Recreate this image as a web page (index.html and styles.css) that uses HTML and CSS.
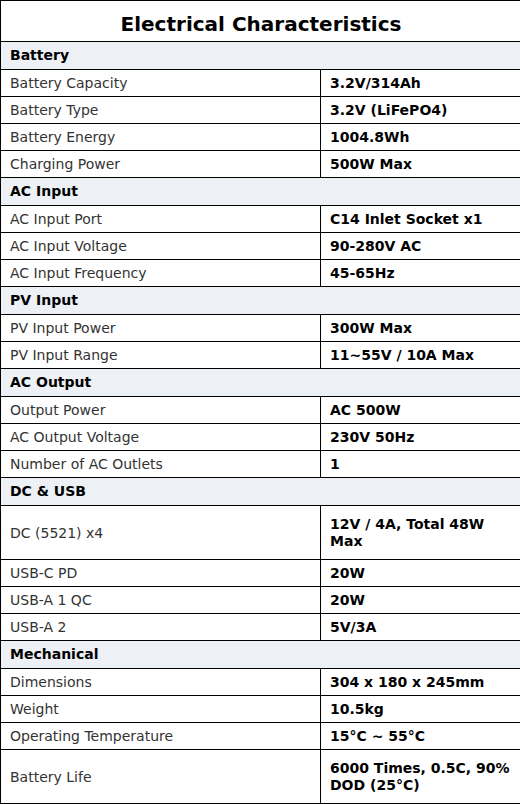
FILE: index.html
```html
<!DOCTYPE html>
<html>
<head>
<meta charset="utf-8">
<link rel="stylesheet" href="styles.css">
</head>
<body>
<table class="spec">
  <colgroup><col class="c1"><col class="c2"></colgroup>
  <tr><th colspan="2" class="title">Electrical Characteristics</th></tr>
  <tr><td colspan="2" class="sec">Battery</td></tr>
  <tr><td class="lab">Battery Capacity</td><td class="val">3.2V/314Ah</td></tr>
  <tr><td class="lab">Battery Type</td><td class="val">3.2V (LiFePO4)</td></tr>
  <tr><td class="lab">Battery Energy</td><td class="val">1004.8Wh</td></tr>
  <tr><td class="lab">Charging Power</td><td class="val">500W Max</td></tr>
  <tr><td colspan="2" class="sec">AC Input</td></tr>
  <tr><td class="lab">AC Input Port</td><td class="val">C14 Inlet Socket x1</td></tr>
  <tr><td class="lab">AC Input Voltage</td><td class="val">90-280V AC</td></tr>
  <tr><td class="lab">AC Input Frequency</td><td class="val">45-65Hz</td></tr>
  <tr><td colspan="2" class="sec">PV Input</td></tr>
  <tr><td class="lab">PV Input Power</td><td class="val">300W Max</td></tr>
  <tr><td class="lab">PV Input Range</td><td class="val">11~55V / 10A Max</td></tr>
  <tr><td colspan="2" class="sec">AC Output</td></tr>
  <tr><td class="lab">Output Power</td><td class="val">AC 500W</td></tr>
  <tr><td class="lab">AC Output Voltage</td><td class="val">230V 50Hz</td></tr>
  <tr><td class="lab">Number of AC Outlets</td><td class="val">1</td></tr>
  <tr><td colspan="2" class="sec">DC &amp; USB</td></tr>
  <tr class="tall"><td class="lab">DC (5521) x4</td><td class="val">12V / 4A, Total 48W Max</td></tr>
  <tr><td class="lab">USB-C PD</td><td class="val">20W</td></tr>
  <tr><td class="lab">USB-A 1 QC</td><td class="val">20W</td></tr>
  <tr><td class="lab">USB-A 2</td><td class="val">5V/3A</td></tr>
  <tr><td colspan="2" class="sec">Mechanical</td></tr>
  <tr><td class="lab">Dimensions</td><td class="val">304 x 180 x 245mm</td></tr>
  <tr><td class="lab">Weight</td><td class="val">10.5kg</td></tr>
  <tr><td class="lab">Operating Temperature</td><td class="val">15°C ~ 55°C</td></tr>
  <tr class="tall"><td class="lab">Battery Life</td><td class="val">6000 Times, 0.5C, 90% DOD (25°C)</td></tr>
</table>
</body>
</html>
```
FILE: styles.css
```css
html, body {
  margin: 0;
  padding: 0;
  overflow: hidden;
  background: #fff;
}
.spec {
  border-collapse: collapse;
  width: 521px;
  table-layout: fixed;
  font-family: "DejaVu Sans", sans-serif;
  font-size: 14px;
  line-height: 16px;
  color: #000;
}
.c1 { width: 320px; }
.c2 { width: 201px; }
.spec th, .spec td {
  border: 1px solid #000;
  padding: 5px 9px;
  text-align: left;
  vertical-align: middle;
}
.spec .title {
  font-size: 20px;
  line-height: 23px;
  font-weight: bold;
  text-align: center;
  padding: 12px 9px 5px;
}
.spec .sec {
  background: #edf0f4;
  font-weight: bold;
  padding-bottom: 6px;
}
.spec .lab {
  color: #333;
}
.spec .val {
  font-weight: bold;
}
.spec .tall td {
  padding-top: 10px;
  padding-bottom: 9px;
  line-height: 17px;
}
```
